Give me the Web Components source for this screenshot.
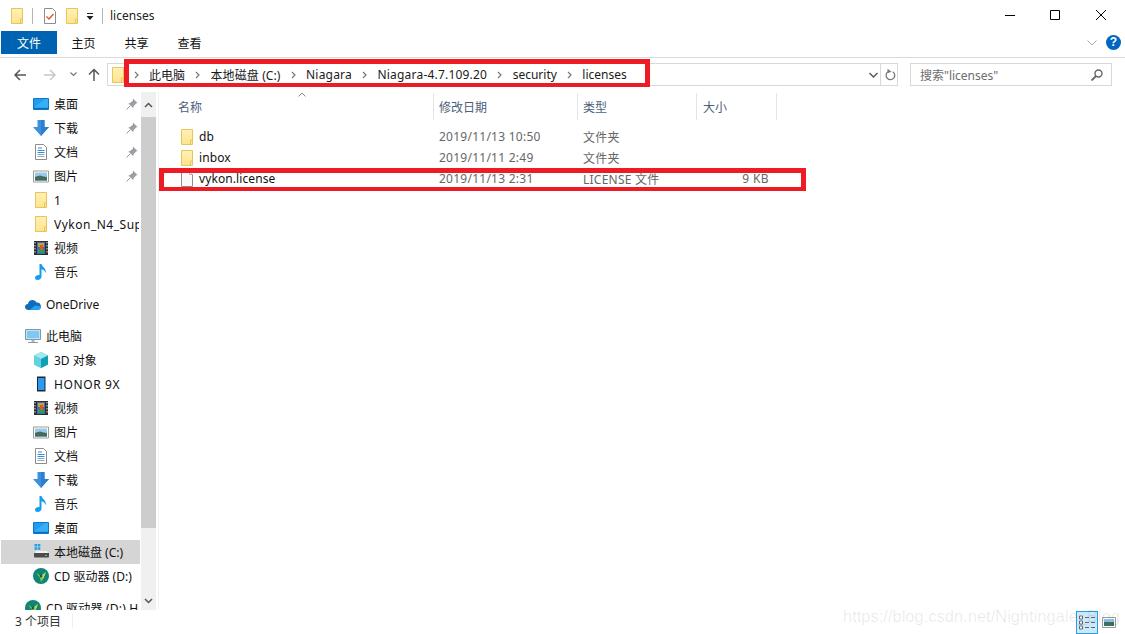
<!DOCTYPE html>
<html lang="zh">
<head>
<meta charset="utf-8">
<title>licenses</title>
<style>
  html, body { margin: 0; padding: 0; background: #fff; }
  body { font: 12px "Noto Sans", "Noto Sans CJK SC", sans-serif; color: #111; }
</style>
</head>
<body>
<x-explorer>
  <x-titlebar slot="title" title-text="licenses"></x-titlebar>
  <x-ribbon slot="ribbon"></x-ribbon>
  <x-addressbar slot="address" path="此电脑|本地磁盘 (C:)|Niagara|Niagara-4.7.109.20|security|licenses" search="搜索&quot;licenses&quot;"></x-addressbar>
  <x-nav slot="nav">
    <x-nav-item child pin icon="desktop">桌面</x-nav-item>
    <x-nav-item child pin icon="download">下载</x-nav-item>
    <x-nav-item child pin icon="doc">文档</x-nav-item>
    <x-nav-item child pin icon="picture">图片</x-nav-item>
    <x-nav-item child icon="folder">1</x-nav-item>
    <x-nav-item child icon="folder" style="letter-spacing:.5px">Vykon_N4_Supervisor</x-nav-item>
    <x-nav-item child icon="video">视频</x-nav-item>
    <x-nav-item child icon="music">音乐</x-nav-item>
    <x-nav-item gap icon="cloud">OneDrive</x-nav-item>
    <x-nav-item gap icon="pc">此电脑</x-nav-item>
    <x-nav-item child icon="cube">3D 对象</x-nav-item>
    <x-nav-item child icon="phone" style="letter-spacing:.6px">HONOR 9X</x-nav-item>
    <x-nav-item child icon="video">视频</x-nav-item>
    <x-nav-item child icon="picture">图片</x-nav-item>
    <x-nav-item child icon="doc">文档</x-nav-item>
    <x-nav-item child icon="download">下载</x-nav-item>
    <x-nav-item child icon="music">音乐</x-nav-item>
    <x-nav-item child icon="desktop">桌面</x-nav-item>
    <x-nav-item child selected icon="drive">本地磁盘 (C:)</x-nav-item>
    <x-nav-item child icon="cd">CD 驱动器 (D:)</x-nav-item>
    <x-nav-item gap icon="cd" style="letter-spacing:.2px">CD 驱动器 (D:) HONOR</x-nav-item>
  </x-nav>
  <x-file-list slot="list">
    <x-file-row icon="folder" name="db" date="2019/11/13 10:50" type="文件夹"></x-file-row>
    <x-file-row icon="folder" name="inbox" date="2019/11/11 2:49" type="文件夹"></x-file-row>
    <x-file-row icon="file" name="vykon.license" date="2019/11/13 2:31" type="LICENSE 文件" size="9 KB"></x-file-row>
  </x-file-list>
  <x-statusbar slot="status" count="3 个项目"></x-statusbar>
  <x-callout slot="over" style="left:124px;top:59px;width:526px;height:28px"></x-callout>
  <x-callout slot="over" style="left:159px;top:168px;width:647px;height:23px"></x-callout>
</x-explorer>

<script>
const ICONS = {
  folder: `<defs><linearGradient id="f" x1="0" y1="0" x2="0" y2="1"><stop offset="0" stop-color="#fff0b5"/><stop offset="1" stop-color="#fde58e"/></linearGradient></defs>
    <path d="M2.5.5h11v15h-11z" fill="url(#f)" stroke="#e8c45a"/><path d="M11.5 15v-4h2" fill="none" stroke="#e8c45a"/>`,
  desktop: `<path d="M.5 2.500h15v11H.5z" fill="#1f9bf0" stroke="#0b78c9"/><path d="M1 11.500l11-8.500h3v8.500z" fill="#38aef5"/><path d="M1 12h14v1H1z" fill="#0a6fb8"/>`,
  download: `<path d="M4.500 0h7v7H16l-8 9-8-9h4.500z" fill="#3d8fdd"/><path d="M8 0h3.500v7H16l-8 9z" fill="#2f7fcf"/>`,
  doc: `<path d="M2.500.5h8l3 3v12h-11z" fill="#fff" stroke="#8c8c8c"/><path d="M5 4h4M4.500 6.500h7M4.500 8.500h7" stroke="#2f8fdc"/><path d="M4.500 10.500h7M4.500 12.500h7" stroke="#9aa5ad"/>`,
  picture: `<path d="M.5 3h15v11H.5z" fill="#fff" stroke="#9c9c9c"/><path d="M2 4.500h12v4H2z" fill="#9cc9ea"/><path d="M2 8.500h12v4H2z" fill="#5d8a84"/><path d="M2 9l5-1.500 7 2v3H2z" fill="#3f6d62"/>`,
  video: `<path d="M1 1h14v14H1z" fill="#2e2e2e"/><path d="M4 2h8v12H4z" fill="#3a6fc0"/><path d="M5 3h6v4H5z" fill="#c7a23a"/><path d="M5 9h6v4H5z" fill="#2f9b58"/><path d="M7 5h3v5H7z" fill="#d9572b"/><path d="M2 2v12M14 2v12" stroke="#ddd" stroke-dasharray="1.500 1.500"/>`,
  music: `<path d="M6.500 0h2c.4 3 4.900 4 4.400 9-.8-2-2.700-3.500-4.400-3.800v7.300c0 2-1.800 3.500-3.900 3.500C3 16 2 15 2 13.700c0-1.700 2-3 4.500-2.700z" fill="#159bf0"/>`,
  cloud: `<path d="M3.500 14C1.500 14 0 12.700 0 11c0-1.700 1.300-3 3-3 .2-2.500 2.300-4 4.500-4 1.800 0 3.300 1 4 2.500 2.500-.2 4.500 1.500 4.500 4 0 2-1.500 3.500-3.500 3.500z" fill="#0f6cbd"/><path d="M4.500 14l5.500-4.500 6 .8c0 2.200-1.500 3.700-3.500 3.700z" fill="#28a0ea"/>`,
  pc: `<path d="M.5 1.500h15v10H.5z" fill="#bfe3f7" stroke="#7f97a8"/><path d="M2 3h12v7H2z" fill="#7fc8ef"/><path d="M6.500 12h3v2h-3z" fill="#a9b7c0"/><path d="M3 14.500h10" stroke="#8c9aa3"/>`,
  cube: `<path d="M8 0l7 3.500v9L8 16l-7-3.500v-9z" fill="#37c0cf"/><path d="M8 0l7 3.500L8 7 1 3.500z" fill="#a4e8ef"/><path d="M8 7v9l7-3.500v-9z" fill="#129fb4"/><path d="M8 7v9l-7-3.500v-9z" fill="#5fd3df"/>`,
  phone: `<path d="M4 .5h8.500v15H4z" fill="#1d2730"/><path d="M5 2h6.500v12H5z" fill="#2a9bf0"/>`,
  drive: `<path d="M1.500 0h2.600v2.600H1.500zM4.700 0h2.600v2.600H4.700zM1.500 3.200h2.600v2.600H1.500zM4.700 3.200h2.600v2.600H4.700z" fill="#1fa0e8"/><path d="M2 9l1-2h11l1 2z" fill="#f2f2f2"/><path d="M1 9h15v3.500c0 .5-.5 1-1 1H2c-.5 0-1-.5-1-1z" fill="#4c4c4c"/><path d="M12 11h2v1h-2z" fill="#4fd05a"/>`,
  cd: `<circle cx="8" cy="8" r="8" fill="#0f8478"/><path d="M3 5l5 3 5-4-3 7-2 3-1-4z" fill="#8cc63f"/><path d="M8 8l5-4-3 7z" fill="#cfe04a"/><circle cx="8" cy="8" r="1.500" fill="#0a5f57"/>`,
  file: `<path d="M2.500.5h8l3 3v12h-11z" fill="#f7f9fb" stroke="#8e8e8e"/><path d="M10.500.5v3h3" fill="#fff" stroke="#b5b5b5"/>`,
  checkdoc: `<path d="M2.500.5h8l3 3v12h-11z" fill="#fff" stroke="#8c8c8c"/><path d="M4.500 8.500l2.500 2.500 4.500-5" fill="none" stroke="#e2562a" stroke-width="1.400"/>`
};

// one icon, a 16px box; the nav item sets its name after the clone, so watch the attribute
class XIcon extends HTMLElement {
  static get observedAttributes() { return ['name']; }

  constructor() {
    super();
    this.attachShadow({ mode: 'open' });
  }

  attributeChangedCallback() { this.render(); }
  connectedCallback() { this.render(); }

  render() {
    this.shadowRoot.innerHTML = `<style>
      :host { display: block; width: 16px; height: 16px; flex: none; }
      svg { display: block; width: 16px; height: 16px; }
    </style><svg viewBox="0 0 16 16">${ICONS[this.getAttribute('name')] || ''}</svg>`;
  }
}
customElements.define('x-icon', XIcon);

const explorerTemplate = document.createElement('template');
explorerTemplate.innerHTML = `
  <style>
    :host { display: flex; flex-direction: column; position: relative; width: 1125px; height: 634px; overflow: hidden; background: #fff; }
    .main { display: flex; height: 518px; }
    .mark { position: absolute; left: 843px; top: 607px; font: 16.500px "Liberation Sans", sans-serif; color: rgba(0,0,0,.09); white-space: nowrap; }
  </style>
  <slot name="title"></slot>
  <slot name="ribbon"></slot>
  <slot name="address"></slot>
  <div class="main"><slot name="nav"></slot><slot name="list"></slot></div>
  <slot name="status"></slot>
  <slot name="over"></slot>
  <div class="mark">https://blog.csdn.net/Nightingale_Blog</div>
`;
class XExplorer extends HTMLElement {
  constructor() {
    super();
    this.attachShadow({ mode: 'open' });
    this.shadowRoot.appendChild(explorerTemplate.content.cloneNode(true));
  }
}
customElements.define('x-explorer', XExplorer);

class XTitlebar extends HTMLElement {
  connectedCallback() {
    const root = this.shadowRoot || this.attachShadow({ mode: 'open' });
    root.innerHTML = `<style>
      :host { display: flex; align-items: center; height: 31px; padding-left: 9px; box-sizing: border-box; }
      .sep { width: 1px; height: 16px; background: #b5b5b5; }
      .drop { margin: 0 6px 0 4px; width: 12px; }
      .title { margin-left: 7px; color: #222; }
      .controls { margin-left: auto; display: flex; }
      .controls svg { display: block; width: 46px; height: 31px; }
    </style>
    <x-icon name="folder"></x-icon>
    <div class="sep" style="margin:0 9px 0 7px"></div>
    <x-icon name="checkdoc" style="margin-right:6px"></x-icon>
    <x-icon name="folder"></x-icon>
    <svg class="drop" viewBox="0 0 12 16" height="16"><path d="M3 5.500h6" stroke="#222"/><path d="M2.500 8h7L6 12z" fill="#222"/></svg>
    <div class="sep"></div>
    <div class="title">${this.getAttribute('title-text')}</div>
    <div class="controls">
      <svg viewBox="0 0 46 31"><path d="M18 15.500h10" stroke="#000"/></svg>
      <svg viewBox="0 0 46 31"><path d="M17.500 10.500h9v9h-9z" fill="none" stroke="#000"/></svg>
      <svg viewBox="0 0 46 31"><path d="M17 10l10 10M27 10L17 20" stroke="#000"/></svg>
    </div>`;
  }
}
customElements.define('x-titlebar', XTitlebar);

const ribbonTemplate = document.createElement('template');
ribbonTemplate.innerHTML = `
  <style>
    :host { display: flex; height: 27px; box-sizing: border-box; border-bottom: 1px solid #dadada; padding-left: 1px; }
    .tabs { display: flex; height: 23px; width: 100%; }
    .tab { display: flex; align-items: center; justify-content: center; width: 53px; }
    .file { width: 56px; background: #0063b1; color: #fff; }
    .right { margin-left: auto; display: flex; align-items: center; padding-right: 4px; }
    .help { width: 15px; height: 15px; border-radius: 50%; background: #0067c0; color: #fff; font: bold 12px/15px "Liberation Sans", sans-serif; text-align: center; margin-left: 9px; }
  </style>
  <div class="tabs">
    <div class="tab file">文件</div>
    <div class="tab">主页</div>
    <div class="tab">共享</div>
    <div class="tab">查看</div>
    <div class="right">
      <svg width="10" height="6" viewBox="0 0 10 6"><path d="M.5.500L5 5 9.500.500" fill="none" stroke="#aaa"/></svg>
      <div class="help">?</div>
    </div>
  </div>
`;
class XRibbon extends HTMLElement {
  constructor() {
    super();
    this.attachShadow({ mode: 'open' });
    this.shadowRoot.appendChild(ribbonTemplate.content.cloneNode(true));
  }
}
customElements.define('x-ribbon', XRibbon);

// letter spacing per crumb: the reference font runs a little wider on some of them
const crumbSpacing = p => p.startsWith('Niagara') ? '.2px' : p.includes('(') ? '.1px' : '0';

class XAddressbar extends HTMLElement {
  connectedCallback() {
    const chev = `<svg class="chev" width="5" height="8" viewBox="0 0 5 8"><path d="M1 1l3 3-3 3" fill="none" stroke="#777" stroke-width="1.200"/></svg>`;
    const crumbs = this.getAttribute('path').split('|')
      .map(p => `${chev}<span class="crumb" style="letter-spacing:${crumbSpacing(p)}">${p}</span>`).join('');
    const root = this.shadowRoot || this.attachShadow({ mode: 'open' });
    root.innerHTML = `<style>
      :host { display: flex; align-items: center; height: 34px; box-sizing: border-box; padding: 5px 13px 6px 14px; }
      .btn { display: block; flex: none; }
      .box { display: flex; align-items: center; height: 23px; box-sizing: border-box; border: 1px solid #d9d9d9; }
      .path { width: 791px; margin-left: 7px; padding-left: 2px; }
      .path x-icon { margin-right: 7.500px; }
      .chev { flex: none; }
      .crumb { margin: 0 10px 0 10.500px; white-space: nowrap; color: #1a1a1a; }
      .tail { margin-left: auto; display: flex; align-items: center; height: 100%; }
      .tail .split { width: 1px; height: 100%; background: #d9d9d9; margin: 0 4px 0 2px; }
      .search { width: 202px; margin-left: 12px; padding: 0 8px 0 9px; color: #6d6d6d; justify-content: space-between; }
    </style>
    <svg class="btn" width="12" height="12" viewBox="0 0 12 12"><path d="M12 6H1.500M6 1L1 6l5 5" fill="none" stroke="#555" stroke-width="1.500"/></svg>
    <svg class="btn" style="margin-left:18px" width="12" height="12" viewBox="0 0 12 12"><path d="M0 6h10.500M6 1l5 5-5 5" fill="none" stroke="#c8c8c8" stroke-width="1.500"/></svg>
    <svg class="btn" style="margin-left:14px" width="7" height="5" viewBox="0 0 7 5"><path d="M.5.500L3.500 3.500 6.500.500" fill="none" stroke="#777" stroke-width="1.200"/></svg>
    <svg class="btn" style="margin-left:11px" width="12" height="13" viewBox="0 0 12 13"><path d="M6 13V1.500M1 6.500l5-5 5 5" fill="none" stroke="#555" stroke-width="1.500"/></svg>
    <div class="box path">
      <x-icon name="folder"></x-icon>${crumbs}
      <div class="tail">
        <svg width="9" height="6" viewBox="0 0 9 6"><path d="M.5 1L4.500 5 8.500 1" fill="none" stroke="#555" stroke-width="1.400"/></svg>
        <div class="split"></div>
        <svg style="margin-right:1px" width="11" height="12" viewBox="0 0 11 12"><path d="M7.700 2.700A4.300 4.300 0 1 1 3 2.800" fill="none" stroke="#777" stroke-width="1.300"/><path d="M3.500 0v4.500L7.500 3z" fill="#777" transform="translate(-1 -.200)"/></svg>
      </div>
    </div>
    <div class="box search">
      <span>${this.getAttribute('search').replace(/"/g, '&quot;')}</span>
      <svg width="12" height="12" viewBox="0 0 12 12"><circle cx="7.500" cy="4.500" r="3.500" fill="none" stroke="#666" stroke-width="1.400"/><path d="M5 7l-4.500 4.500" stroke="#666" stroke-width="1.800"/></svg>
    </div>`;
  }
}
customElements.define('x-addressbar', XAddressbar);

const navTemplate = document.createElement('template');
navTemplate.innerHTML = `
  <style>
    :host { display: flex; width: 156px; height: 518px; flex: none; }
    .items { width: 141px; overflow: hidden; display: flex; flex-direction: column; flex: none; }
    .bar { width: 15px; background: #f0f0f0; display: flex; flex-direction: column; }
    .arrow { height: 25px; display: flex; align-items: center; justify-content: center; flex: none; }
    .thumb { height: 411px; background: #cdcdcd; flex: none; }
    .down { margin-top: auto; height: 18px; }
  </style>
  <div class="items"><slot></slot></div>
  <div class="bar">
    <div class="arrow"><svg width="9" height="6" viewBox="0 0 9 6"><path d="M1 5l3.500-3.500L8 5" fill="none" stroke="#555" stroke-width="1.500"/></svg></div>
    <div class="thumb"></div>
    <div class="arrow down"><svg width="9" height="6" viewBox="0 0 9 6"><path d="M1 1l3.500 3.500L8 1" fill="none" stroke="#555" stroke-width="1.500"/></svg></div>
  </div>
`;
class XNav extends HTMLElement {
  constructor() {
    super();
    this.attachShadow({ mode: 'open' });
    this.shadowRoot.appendChild(navTemplate.content.cloneNode(true));
  }
}
customElements.define('x-nav', XNav);

const navItemTemplate = document.createElement('template');
navItemTemplate.innerHTML = `
  <style>
    :host { display: block; flex: none; }
    :host([gap]) { margin-top: 8px; }
    .row { display: flex; align-items: center; height: 24px; padding-left: 24px; margin-left: 1px; width: 139px; box-sizing: border-box; position: relative; }
    :host([child]) .row { padding-left: 32px; }
    :host([selected]) .row { background: #d5d5d5; }
    .text { margin: 0 1px 0 5px; white-space: nowrap; overflow: hidden; flex: 1; }
    .pin { position: absolute; left: 125px; top: 6px; }
  </style>
  <div class="row">
    <x-icon></x-icon>
    <span class="text"><slot></slot></span>
  </div>
`;
class XNavItem extends HTMLElement {
  constructor() {
    super();
    this.attachShadow({ mode: 'open' });
    this.shadowRoot.appendChild(navItemTemplate.content.cloneNode(true));
  }

  connectedCallback() {
    this.shadowRoot.querySelector('x-icon').setAttribute('name', this.getAttribute('icon'));
    if (this.hasAttribute('pin') && !this.shadowRoot.querySelector('.pin')) {
      const pin = document.createElementNS('http://www.w3.org/2000/svg', 'svg');
      pin.setAttribute('class', 'pin');
      pin.setAttribute('width', '12');
      pin.setAttribute('height', '12');
      pin.setAttribute('viewBox', '0 0 12 12');
      pin.innerHTML = '<path d="M7 .5l4.500 4.500-1.500.5-2.500 3-.500 1.500L2.500 5.500 4 5l3-2.500z" fill="#9a9fa5"/><path d="M4 8l-3.500 3.500" stroke="#9a9fa5"/>';
      this.shadowRoot.querySelector('.row').appendChild(pin);
    }
  }
}
customElements.define('x-nav-item', XNavItem);

const listTemplate = document.createElement('template');
listTemplate.innerHTML = `
  <style>
    :host { display: block; flex: 1; position: relative; padding-left: 16px; box-sizing: border-box; }
    :host::before { content: ""; position: absolute; left: 2px; top: 0; bottom: 0; width: 1px; background: #f2f2f2; }
    .head { display: grid; grid-template-columns: 262px 144px 119px 80px; height: 27px; margin: 1px 0 6px; color: #4c607a; }
    .cell { display: flex; align-items: center; padding-left: 5px; border-right: 1px solid #e5e5e5; }
    .cell:first-child { padding-left: 6px; }
    .cell:last-child { padding-left: 6px; }
    .sort { position: absolute; left: 142px; top: 0; }
  </style>
  <div class="head">
    <div class="cell">名称</div>
    <div class="cell">修改日期</div>
    <div class="cell">类型</div>
    <div class="cell">大小</div>
  </div>
  <svg class="sort" width="8" height="5" viewBox="0 0 8 5"><path d="M.5 4.500L4 1l3.500 3.500" fill="none" stroke="#8a8a8a"/></svg>
  <slot></slot>
`;
class XFileList extends HTMLElement {
  constructor() {
    super();
    this.attachShadow({ mode: 'open' });
    this.shadowRoot.appendChild(listTemplate.content.cloneNode(true));
  }
}
customElements.define('x-file-list', XFileList);

class XFileRow extends HTMLElement {
  connectedCallback() {
    const root = this.shadowRoot || this.attachShadow({ mode: 'open' });
    const attr = n => this.getAttribute(n) || '';
    root.innerHTML = `<style>
      :host { display: grid; grid-template-columns: 262px 144px 119px 80px; height: 21px; align-items: center; color: #666; }
      .name { display: flex; align-items: center; padding-left: 7px; color: #111; }
      .name span { margin-left: 4px; letter-spacing: .1px; }
      .col { padding-left: 5px; white-space: nowrap; letter-spacing: .25px; }
      .size { text-align: right; padding-right: 8px; letter-spacing: .4px; }
    </style>
    <div class="name"><x-icon name="${attr('icon')}"></x-icon><span>${attr('name')}</span></div>
    <div class="col">${attr('date')}</div>
    <div class="col">${attr('type')}</div>
    <div class="size">${attr('size')}</div>`;
  }
}
customElements.define('x-file-row', XFileRow);

class XStatusbar extends HTMLElement {
  connectedCallback() {
    const root = this.shadowRoot || this.attachShadow({ mode: 'open' });
    root.innerHTML = `<style>
      :host { display: flex; align-items: center; height: 24px; padding-left: 15px; color: #333; position: relative; }
      .count { width: 57px; margin-bottom: 2px; }
      .sep { width: 1px; height: 14px; background: #eee; margin-bottom: 2px; }
      .views { margin-left: auto; display: flex; align-items: center; }
      .on { width: 22px; height: 23px; box-sizing: border-box; border: 1px solid #26a0da; background: #cce8ff; display: flex; align-items: center; justify-content: center; margin-right: 4px; }
      .off { margin-right: 9px; display: block; }
    </style>
    <div class="count">${this.getAttribute('count')}</div>
    <div class="sep"></div>
    <div class="views">
      <div class="on"><svg width="16" height="15" viewBox="0 0 16 15"><path d="M.5 1h3v3h-3zM.5 6h3v3h-3zM.5 11h3v3h-3z" fill="#fff" stroke="#666"/><path d="M6 2.500h4M12 2.500h4M6 7.500h4M12 7.500h4M6 12.500h4M12 12.500h4" stroke="#666"/></svg></div>
      <svg class="off" width="14" height="11" viewBox="0 0 14 11"><path d="M.5.500h13v10H.5z" fill="#fff" stroke="#999"/><path d="M2 2h10v3H2z" fill="#8cc4ec"/><path d="M2 5h10v4H2z" fill="#3f6d62"/></svg>
    </div>`;
  }
}
customElements.define('x-statusbar', XStatusbar);

// red box drawn over the screenshot; place and size come from the user
class XCallout extends HTMLElement {
  constructor() {
    super();
    this.attachShadow({ mode: 'open' }).innerHTML = `<style>
      :host { display: block; position: absolute; box-sizing: border-box; border: 5px solid #ed1c24; border-bottom-width: 4px; pointer-events: none; }
    </style>`;
  }
}
customElements.define('x-callout', XCallout);
</script>
</body>
</html>
